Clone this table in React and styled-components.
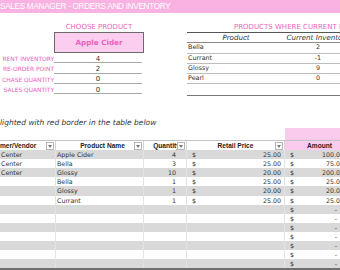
import React from 'react';
import styled, { createGlobalStyle } from 'styled-components';

const Global = createGlobalStyle`
  html, body { margin: 0; padding: 0; background: #fff; overflow: hidden; }
  body { font-family: "DejaVu Sans", "Liberation Sans", sans-serif; color: #333; }
`;

const PINK_TEXT = '#e964bd';

const Page = styled.div`
  width: 340px;
  height: 270px;
  overflow: hidden;
`;

const TitleBar = styled.div`
  height: 13px;
  background: #f9b2e2;
  color: #fff;
  font-family: "Liberation Sans", "DejaVu Sans", sans-serif;
  font-size: 8.2px;
  letter-spacing: -0.3px;
  line-height: 13px;
  white-space: nowrap;
`;

const Top = styled.div`
  display: flex;
  margin-top: 8px;
  height: 76px;
`;

const ChooseGrid = styled.div`
  display: grid;
  grid-template-columns: 54px 90px;
  grid-template-rows: 11px 21px repeat(4, 10.3px);
  flex: none;
`;

const PinkHeading = styled.div`
  color: ${PINK_TEXT};
  font-size: 7px;
  line-height: 12px;
  white-space: nowrap;
  text-align: ${p => (p.$left ? 'left' : 'center')};
  padding-left: ${p => p.$pad || 0}px;
`;

const ProductBox = styled.div`
  grid-column: 2;
  background: #fbcdee;
  border: 1px solid #6a6a6a;
  color: ${PINK_TEXT};
  font-weight: bold;
  font-size: 7.2px;
  display: flex;
  align-items: center;
  justify-content: center;
`;

const Label = styled.div`
  color: ${PINK_TEXT};
  font-size: 5.9px;
  white-space: nowrap;
  display: flex;
  align-items: center;
  justify-content: flex-end;
  padding-top: 2px;
`;

const Value = styled.div`
  border-bottom: 1px solid #a8a8a8;
  font-size: 7px;
  display: flex;
  align-items: center;
  justify-content: center;
  padding-top: 2px;
  margin-right: 2px;
`;

const Spacer = styled.div``;

const Reorder = styled.div`
  margin-left: 43px;
  width: 164px;
  flex: none;
  display: flex;
  flex-direction: column;
`;

const MiniTable = styled.div`
  border-top: 1.5px solid #555;
  border-bottom: 1.5px solid #777;
  display: grid;
  grid-template-columns: 98px 66px;
  grid-auto-rows: 10.3px;
  margin-top: -1px;
`;

const MiniHead = styled.div`
  font-style: italic;
  font-size: 7.1px;
  text-align: center;
  line-height: 9.3px;
  border-bottom: 1px solid #8a8a8a;
  white-space: nowrap;
`;

const MiniCell = styled.div`
  font-size: 6.4px;
  line-height: 9.3px;
  border-bottom: ${p => (p.$last ? 'none' : '1px solid #bdbdbd')};
  text-align: ${p => (p.$num ? 'center' : 'left')};
  padding-left: ${p => (p.$num ? 0 : 1)}px;
  white-space: nowrap;
`;

const Note = styled.div`
  margin-top: 21px;
  height: 10px;
  font-size: 7.5px;
  font-style: italic;
  line-height: 10px;
  white-space: nowrap;
  color: #333;
`;

const COLS = '56px 88px 43px 98px 70px';

const TableTop = styled.div`
  display: grid;
  grid-template-columns: ${COLS};
  height: 12px;
`;

const PinkBlock = styled.div`
  grid-column: 5;
  background: #fbcbed;
`;

const HeadRow = styled.div`
  display: grid;
  grid-template-columns: ${COLS};
  height: 9px;
  border-top: 1px solid #c4c4c4;
`;

const HeadCell = styled.div`
  display: flex;
  align-items: center;
  justify-content: ${p => (p.$left ? 'flex-start' : 'center')};
  font-family: "Liberation Sans", "DejaVu Sans", sans-serif;
  font-weight: bold;
  font-size: 6.6px;
  white-space: nowrap;
  overflow: hidden;
  position: relative;
  background: ${p => (p.$pink ? '#fbcbed' : '#fff')};
  padding-left: ${p => p.$pl || 0}px;
  border-right: 1px solid #d4d4d4;
  color: #222;
`;

const DropBtn = styled.span`
  position: absolute;
  right: 1px;
  top: 1px;
  width: 6px;
  height: 6px;
  border: 1px solid #b5b5b5;
  background: #fff;
  display: flex;
  align-items: center;
  justify-content: center;
`;

const Row = styled.div`
  display: grid;
  grid-template-columns: ${COLS};
  height: 9.12px;
  background: ${p => (p.$shade ? '#d9d9d9' : '#fff')};
`;

const Cell = styled.div`
  font-size: 6.3px;
  line-height: 9.12px;
  white-space: nowrap;
  overflow: hidden;
  border-right: 1px solid #e3e3e3;
  padding-left: ${p => p.$pl || 0}px;
  padding-right: ${p => p.$pr || 0}px;
  text-align: ${p => (p.$right ? 'right' : 'left')};
  display: ${p => (p.$money ? 'flex' : 'block')};
  justify-content: space-between;
`;

const BottomRule = styled.div`
  height: 3px;
  background: #6f6f6f;
`;

const Arrow = () => (
  <svg width="4" height="3" viewBox="0 0 4 3">
    <path d="M0 0 L4 0 L2 3 Z" fill="#777" />
  </svg>
);

const rows = [
  { v: 'Center', p: 'Apple Cider', q: 4, r: '25.00', a: '100.00' },
  { v: 'Center', p: 'Bella', q: 3, r: '25.00', a: '75.00' },
  { v: 'Center', p: 'Glossy', q: 10, r: '20.00', a: '200.00' },
  { v: '', p: 'Bella', q: 1, r: '25.00', a: '25.00' },
  { v: '', p: 'Glossy', q: 1, r: '20.00', a: '20.00' },
  { v: '', p: 'Currant', q: 1, r: '25.00', a: '25.00' },
  ...Array.from({ length: 7 }, () => ({ v: '', p: '', q: '', r: '', a: '-' })),
];

const reorder = [
  ['Bella', '2'],
  ['Currant', '-1'],
  ['Glossy', '9'],
  ['Pearl', '0'],
];

export default function App() {
  return (
    <Page>
      <Global />
      <TitleBar>SALES MANAGER - ORDERS AND INVENTORY</TitleBar>
      <Top>
        <ChooseGrid>
          <Spacer />
          <PinkHeading>CHOOSE PRODUCT</PinkHeading>
          <Spacer />
          <ProductBox>Apple Cider</ProductBox>
          <Label>RENT INVENTORY</Label>
          <Value>4</Value>
          <Label>RE-ORDER POINT</Label>
          <Value>2</Value>
          <Label>CHASE QUANTITY</Label>
          <Value>0</Value>
          <Label>SALES QUANTITY</Label>
          <Value>0</Value>
        </ChooseGrid>
        <Reorder>
          <PinkHeading $left $pad={47}>PRODUCTS WHERE CURRENT INVENTORY</PinkHeading>
          <MiniTable>
            <MiniHead>Product</MiniHead>
            <MiniHead>Current Inventory</MiniHead>
            {reorder.map(([n, v]) => (
              <React.Fragment key={n}>
                <MiniCell>{n}</MiniCell>
                <MiniCell $num>{v}</MiniCell>
              </React.Fragment>
            ))}
            <MiniCell $last />
            <MiniCell $last />
          </MiniTable>
        </Reorder>
      </Top>
      <Note>lighted with red border in the table below</Note>
      <TableTop>
        <PinkBlock />
      </TableTop>
      <HeadRow>
        <HeadCell $left>mer/Vendor<DropBtn><Arrow /></DropBtn></HeadCell>
        <HeadCell $pl={6}>Product Name<DropBtn><Arrow /></DropBtn></HeadCell>
        <HeadCell $pl={3}>Quantity<DropBtn><Arrow /></DropBtn></HeadCell>
        <HeadCell>Retail Price<DropBtn><Arrow /></DropBtn></HeadCell>
        <HeadCell $pink>Amount</HeadCell>
      </HeadRow>
      {rows.map((r, i) => (
        <Row key={i} $shade={i % 2 === 0}>
          <Cell $pl={1}>{r.v}</Cell>
          <Cell $pl={1}>{r.p}</Cell>
          <Cell $right $pr={10}>{r.q}</Cell>
          <Cell $money $pl={5} $pr={3}>
            {r.r ? <><span>$</span><span>{r.r}</span></> : null}
          </Cell>
          <Cell $money $pl={5} $pr={r.a === '-' ? 17 : 10}>
            <span>$</span><span>{r.a}</span>
          </Cell>
        </Row>
      ))}
      <BottomRule />
    </Page>
  );
}
